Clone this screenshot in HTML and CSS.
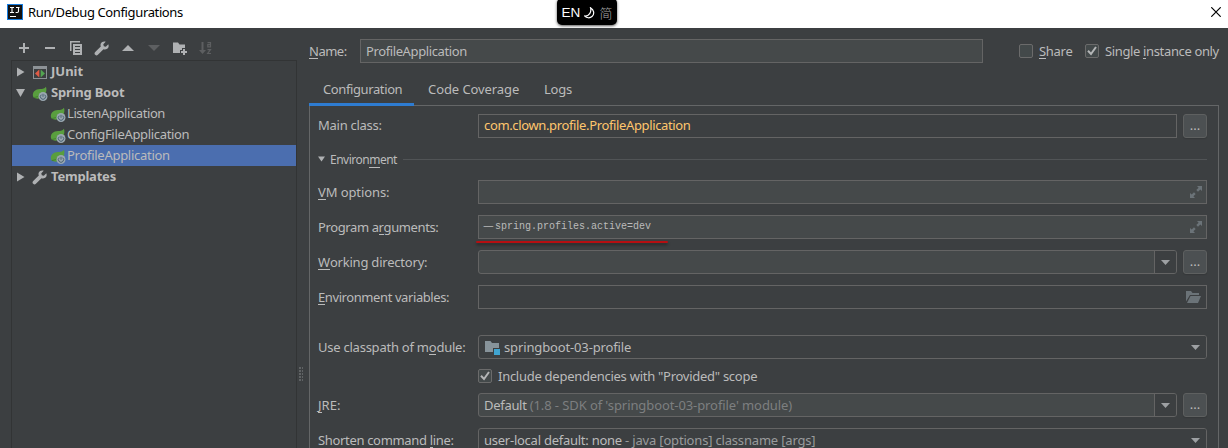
FILE: index.html
```html
<!DOCTYPE html>
<html lang="en">
<head>
<meta charset="utf-8">
<title>Run/Debug Configurations</title>
<link rel="stylesheet" href="styles.css">
</head>
<body>
<svg class="defs" width="0" height="0" aria-hidden="true">
  <symbol id="spring" viewBox="0 0 16 16">
    <path d="M1 11.200C.2 6.800 3.500 4.100 8 4 11 3.900 12.600 3.600 13.900 1.700c.8 2 .7 4.500-.4 6.500L8 13.300C5.500 14.100 3 13.500 1.700 12.600z" fill="#599e3e"/>
    <path d="M1.800 12.500c3.200-.4 5-1.200 6.700-3" stroke="#3f7a2c" stroke-width=".8" fill="none"/>
    <circle cx="11" cy="11.500" r="4.500" fill="#9aa7b0"/>
    <path d="M9.300 9.700a2.600 2.600 0 1 0 3.400 0M11 8.800v3" stroke="#4a6272" stroke-width="1" fill="none"/>
  </symbol>
  <symbol id="wrench" viewBox="0 0 16 16">
    <path d="M14.300 4.300 11.800 6.700 9.800 6.200 9.300 4.200 11.700 1.700C9.700 1 7.600 1.700 6.800 3.500c-.4 1-.4 2 0 3L1.200 12.100a1.500 1.500 0 0 0 2.700 2.700L9.500 9.200c1 .4 2.200.4 3.200-.1 1.800-.9 2.400-3 1.600-4.800z" fill="#afb1b3"/>
  </symbol>
  <symbol id="expand" viewBox="0 0 12 12">
    <path d="M7 0h5v5L10.300 3.400 8 5.700 6.300 4 8.600 1.700zM5 12H0V7l1.700 1.600L4 6.300 5.700 8 3.400 10.300z" fill="#6b7378"/>
  </symbol>
  <symbol id="check" viewBox="0 0 14 14">
    <path d="M3 6.800 6 10 11 3" stroke="#b4b6b7" stroke-width="2" fill="none"/>
  </symbol>
</svg>

<header class="titlebar">
  <svg class="logo" width="16" height="16" viewBox="0 0 16 16"><path d="M0 0h16v16H0z" fill="#177de0"/><path d="M1 1h14v14H1z" fill="#111"/><path d="M3 3.500h4M3 8.500h4M5 3v5.500M9 3.500h3.500M11.500 3v4.300q0 1.200-1.200 1.200H8.600M3 12.500h6" stroke="#fff" stroke-width="1.100" fill="none"/></svg>
  <span class="title">Run/Debug Configurations</span>
  <svg class="close" width="10" height="10" viewBox="0 0 10 10"><path d="M.3.3 9.700 9.700M9.700.3.3 9.700" stroke="#000" stroke-width="1.200"/></svg>
  <div class="ime"><span>EN</span><svg width="11" height="12" viewBox="0 0 11 12"><path d="M6.500.7C10 2.700 10.800 7 8 9.500 5.800 11.500 2.500 11 .8 9 5 9.300 7.800 5 6.500.7z" fill="none" stroke="#fff" stroke-width="1.200"/></svg><span class="han">简</span></div>
</header>

<main class="body">
  <aside class="side">
    <div class="toolbar">
      <svg width="16" height="16" viewBox="0 0 16 16"><path d="M8 3v10M3 8h10" stroke="#afb1b3" stroke-width="2"/></svg>
      <svg width="16" height="16" viewBox="0 0 16 16"><path d="M3 8h10" stroke="#afb1b3" stroke-width="2"/></svg>
      <svg width="16" height="16" viewBox="0 0 16 16"><path d="M2 1h10v1.500H3.500V11H2z" fill="#afb1b3"/><path d="M5 4h9v11H5z" fill="#afb1b3"/><path d="M7 6.500h5M7 9.500h5M7 12.500h5" stroke="#3c3f41"/></svg>
      <svg width="16" height="16"><use href="#wrench"/></svg>
      <svg width="16" height="16" viewBox="0 0 16 16"><path d="M2 11 8 5l6 6z" fill="#afb1b3"/></svg>
      <svg width="16" height="16" viewBox="0 0 16 16"><path d="M2 5h12l-6 6z" fill="#5d5f61"/></svg>
      <svg width="16" height="16" viewBox="0 0 16 16"><path d="M1 2.500h5l1.500 2H13V8h-3v2H8v3H1z" fill="#afb1b3"/><path d="M12 9v6M9 12h6" stroke="#afb1b3" stroke-width="2"/></svg>
      <svg width="16" height="16" viewBox="0 0 16 16"><path d="M3.500 2h2v8H8l-3.500 4L1 10h2.500z" fill="#5d5f61"/><path d="M9.500 2.700h3v4.100H9.800V4.700h2.700M9.500 9.700h3L9.700 13.500H13" stroke="#5d5f61" stroke-width="1.200" fill="none"/></svg>
    </div>
    <div class="tree">
      <div class="node"><svg class="arrow" width="9" height="10"><path d="M1 .5 8.500 5 1 9.500z" fill="#afb1b3"/></svg><svg class="ico" width="16" height="16" viewBox="0 0 16 16"><path d="M1 2h14v13H1z" fill="#8d9296"/><path d="M2 5h12v9H2z" fill="#3c3f41"/><path d="M7.300 5.500v8L3 9.500z" fill="#e05a45"/><path d="M8.700 5.500v8l4.300-4z" fill="#53a551"/></svg><b class="t-junit">JUnit</b></div>
      <div class="node"><svg class="arrow" width="9" height="10"><path d="M0 1h9L4.500 9z" fill="#afb1b3"/></svg><svg class="ico" width="16" height="16"><use href="#spring"/></svg><b class="t-spring">Spring Boot</b></div>
      <div class="node leaf"><svg class="ico" width="16" height="16"><use href="#spring"/></svg><span class="t-listen">ListenApplication</span></div>
      <div class="node leaf"><svg class="ico" width="16" height="16"><use href="#spring"/></svg><span class="t-config">ConfigFileApplication</span></div>
      <div class="node leaf selected"><svg class="ico" width="16" height="16"><use href="#spring"/></svg><span class="t-profile">ProfileApplication</span></div>
      <div class="node"><svg class="arrow" width="9" height="10"><path d="M1 .5 8.500 5 1 9.500z" fill="#afb1b3"/></svg><svg class="ico" width="16" height="16"><use href="#wrench"/></svg><b class="t-templates">Templates</b></div>
    </div>
  </aside>
  <div class="splitter"><i class="grip"></i></div>

  <section class="content">
    <div class="namebar">
      <label class="t-name"><u>N</u>ame:</label>
      <div class="field filled name"><span class="t-nameval">ProfileApplication</span></div>
      <span class="checkbox share"></span><span class="t-share"><u>S</u>hare</span>
      <span class="checkbox single"><svg width="14" height="14"><use href="#check"/></svg></span><span class="t-single">Single <u>i</u>nstance only</span>
    </div>
    <nav class="tabs">
      <div class="tab active"><span class="t-conf">Configuration</span></div>
      <div class="tab coverage"><span class="t-cov">Code Coverage</span></div>
      <div class="tab"><span class="t-logs">Logs</span></div>
    </nav>
    <div class="panel">
      <div class="row first"><label class="t-main">Main class:</label><div class="field"><span class="t-class">com.clown.profile.ProfileApplication</span></div><div class="more">...</div></div>
      <div class="section"><svg width="7" height="6"><path d="M0 .5h7L3.500 5.500z" fill="#afb1b3"/></svg><span class="t-env">Environ<u>m</u>ent</span><i class="rule"></i></div>
      <div class="row"><label class="t-vm"><u>V</u>M options:</label><div class="field filled"><svg class="end" width="12" height="12"><use href="#expand"/></svg></div></div>
      <div class="row"><label class="t-prog">Program a<u>r</u>guments:</label><div class="field filled args"><span class="dash">—</span><span class="t-args">spring.profiles.active=dev</span><svg class="end" width="12" height="12"><use href="#expand"/></svg><i class="mark"></i></div></div>
      <div class="row"><label class="t-work"><u>W</u>orking directory:</label><div class="field filled round combo"><span class="drop"><svg width="9" height="5"><path d="M0 0h9L4.500 5z" fill="#9da0a3"/></svg></span></div><div class="more">...</div></div>
      <div class="row envvars"><label class="t-vars"><u>E</u>nvironment variables:</label><div class="field"><svg class="end folder" width="15" height="12" viewBox="0 0 15 12"><path d="M0 10.500V0h5l1.500 2H13v2H4z" fill="#6b7378"/><path d="M4.500 5H15l-3 7H1z" fill="#6b7378"/></svg></div></div>
      <div class="row module"><label class="t-use">Use classpath of m<u>o</u>dule:</label><div class="field round"><svg class="mod" width="16" height="16" viewBox="0 0 16 16"><path d="M1 2h5.500l1.500 2h7v5H9v4H1z" fill="#87939a"/><path d="M10 10h6v6h-6z" fill="#40a4d0"/></svg><span class="t-mod">springboot-03-profile</span><span class="drop plain"><svg width="9" height="5"><path d="M0 0h9L4.500 5z" fill="#9da0a3"/></svg></span></div></div>
      <div class="include"><span class="checkbox"><svg width="14" height="14"><use href="#check"/></svg></span><span class="t-inc">Include dependencies with "Provided" scope</span></div>
      <div class="row"><label class="t-jre"><u>J</u>RE:</label><div class="field filled round combo"><span class="t-def">Default <em>(1.8 - SDK of 'springboot-03-profile' module)</em></span><span class="drop"><svg width="9" height="5"><path d="M0 0h9L4.500 5z" fill="#9da0a3"/></svg></span></div><div class="more">...</div></div>
      <div class="row"><label class="t-short">Shorten command <u>l</u>ine:</label><div class="field round"><span class="t-local">user-local default: none <em class="lite">- java [options] classname [args]</em></span><span class="drop plain"><svg width="9" height="5"><path d="M0 0h9L4.500 5z" fill="#9da0a3"/></svg></span></div></div>
    </div>
  </section>
</main>
</body>
</html>
```

FILE: styles.css
```css
* { box-sizing: border-box; }
body {
  margin: 0; width: 1228px; height: 448px; overflow: hidden;
  display: flex; flex-direction: column;
  background: #3c3f41; color: #bbbbbb;
  font: 13px/20px "Noto Sans", "Open Sans", sans-serif;
  white-space: nowrap;
}
.defs { position: absolute; }
svg { display: block; flex: none; }
i, em { font-style: normal; }
u { text-decoration: none; box-shadow: inset 0 -1px #bbbbbb; display: inline-block; line-height: 16px; }

.titlebar { position: relative; flex: none; height: 28px; background: #fff; color: #000; display: flex; align-items: center; padding: 0 7px; }
.logo { margin-top: -4px; }
.title { margin: -4px 0 0 5px; letter-spacing: -0.37px; }
.close { margin: -4px 0 0 auto; }
.ime {
  position: absolute; left: 557px; top: -2px; width: 60px; height: 27px;
  display: flex; align-items: center; justify-content: center; gap: 4px;
  background: #000; color: #fff; border-radius: 5px; box-shadow: 0 1px 3px #000a;
  font: 13.500px/20px "Liberation Sans", sans-serif; padding-top: 2px;
}
.han { font-family: "Noto Sans CJK SC", sans-serif; font-weight: 300; color: #aaa; font-size: 13px; }

.body { flex: 1; display: flex; min-height: 0; }
.side { width: 286px; margin-left: 11px; display: flex; flex-direction: column; }
.toolbar { height: 32px; padding: 12px 0 0 5px; display: flex; gap: 10px; }
.tree { flex: 1; border: 1px solid #323435; border-bottom: 0; padding-top: 0; }
.node { height: 21px; display: flex; align-items: center; padding-left: 4px; }
.node b, .node span { margin-top: -2px; }
.arrow { margin-right: 8px; }
.ico { margin-right: 2px; }
.node .ico { margin-left: -1px; margin-right: 3px; }
.leaf { padding-left: 39px; }
.leaf .ico { margin-right: 1px; }
.selected { background: #4b6eaf; }
.splitter { width: 12px; display: flex; }
.grip { width: 4px; height: 14px; margin: 339px 0 0 2px; background: radial-gradient(circle at 1px 1px, #8a8c8e 0.6px, transparent 0.8px) 0 0 / 3px 3px; }

.content { width: 910px; display: flex; flex-direction: column; min-height: 0; }
.namebar { height: 24px; margin-top: 11px; display: flex; align-items: center; flex: none; }
.namebar > label { width: 51px; }
.field { flex: 1; height: 24px; border: 1px solid #646464; display: flex; align-items: center; padding-left: 5px; min-width: 0; }
.filled { background: #45494a; }
.round { border-radius: 3px; }
.name { flex: none; width: 623px; }
.name span { margin-top: -1px; }
.checkbox { flex: none; width: 14px; height: 14px; border: 1px solid #6b6b6b; border-radius: 2px; background: #43494a; display: flex; }
.checkbox svg { margin: -1px; }
.share { margin: 0 6px 0 36px; }
.single { margin: 0 6px 0 auto; }
.t-single { width: 114px; }

.tabs { height: 42px; flex: none; display: flex; }
.tab { padding: 16px 14px 0; height: 43px; }
.coverage { width: 116px; }
.active { width: 105px; box-shadow: inset 0 -3px #2e7cd1; z-index: 1; position: relative; }
.panel { flex: 1; border: 1px solid #646667; border-bottom: 0; padding: 8px 11px 0 8px; min-height: 0; }

.row { display: flex; align-items: center; height: 24px; margin-bottom: 11px; }
.row label { width: 160px; flex: none; }
.first label, .first span { margin-top: -2px; }
.t-class { color: #ffc66d; }
.more { width: 24px; height: 24px; margin-left: 6px; border: 1px solid #5e6060; border-radius: 3px; background: #4c5052; box-shadow: 0 1px 1px #35383a; text-align: center; line-height: 20px; }
.section { height: 20px; display: flex; align-items: center; margin: 0 0 11px; font-size: 12px; }
.section span { margin-top: 2px; }
.section svg { margin-right: 5px; }
.rule { flex: 1; height: 1px; background: #515456; margin-left: 6px; }
.end { margin: 0 4px 0 auto; }
.folder { margin-right: 5px; }
.args { position: relative; padding-left: 4px; font: 10px/20px "Liberation Mono", monospace; }
.dash { font: 12px/16px "Noto Sans CJK SC", sans-serif; width: 12px; margin-top: -5px; }
.mark { position: absolute; left: -3px; top: 25px; width: 192px; height: 2px; background: #b50f12; border-radius: 1px; box-shadow: 0 2px 3px #0006; }
.drop { margin-left: auto; width: 22px; height: 22px; flex: none; border-left: 1px solid #646464; background: #3c3f41; display: flex; align-items: center; justify-content: center; border-radius: 0 2px 2px 0; }
.plain { border-left: 0; }
.module { margin: 26px 0 10px; }
.mod { margin-right: 4px; }
.include { display: flex; align-items: center; height: 14px; margin: 0 0 10px 160px; gap: 6px; }
em { color: #7d7f80; }
.lite { color: #999b9c; }

/* Tracking per label */
.t-spring, .t-templates, .t-work { letter-spacing: -0.21px; }
.t-listen { letter-spacing: -0.41px; }
.t-config { letter-spacing: -0.33px; }
.t-profile { letter-spacing: -0.28px; }
.t-name { letter-spacing: -0.5px; }
.t-nameval, .t-conf, .t-prog { letter-spacing: -0.39px; }
.t-share { letter-spacing: -0.3px; }
.t-single, .t-class { letter-spacing: -0.36px; }
.t-cov { letter-spacing: -0.08px; }
.t-logs { letter-spacing: -0.25px; }
.t-main, .t-inc { letter-spacing: -0.27px; }
.t-env { letter-spacing: -0.5px; }
.t-vm { letter-spacing: -0.1px; }
.t-vars { letter-spacing: -0.41px; }
.t-use { letter-spacing: -0.24px; }
.t-mod { letter-spacing: -0.14px; }
.t-def { letter-spacing: -0.3px; }
.t-def em { letter-spacing: -0.09px; }
.t-short { letter-spacing: -0.33px; }
.t-local { letter-spacing: -0.25px; }
.t-local em { letter-spacing: -0.18px; }
```
